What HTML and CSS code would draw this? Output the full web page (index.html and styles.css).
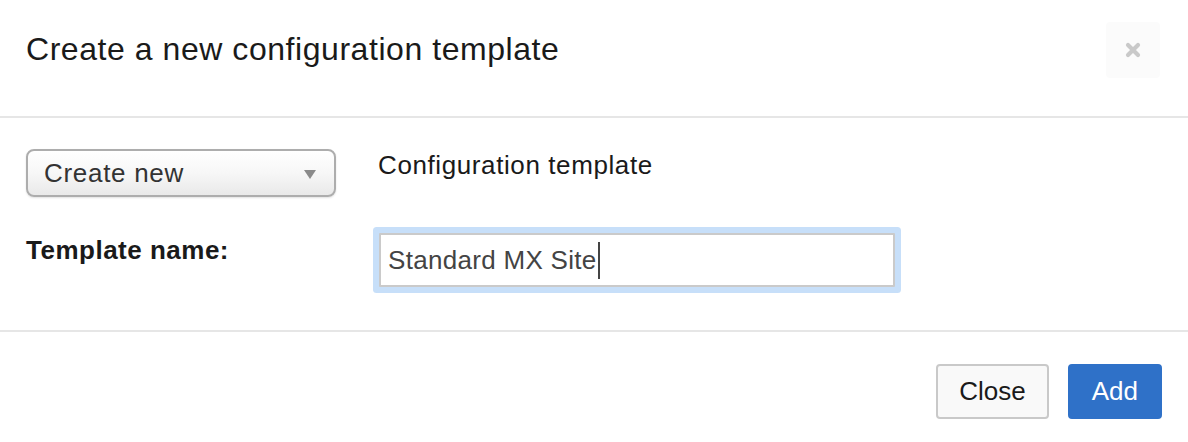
FILE: index.html
```html
<!DOCTYPE html>
<html lang="en">
<head>
<meta charset="utf-8">
<title>Create a new configuration template</title>
<link rel="stylesheet" href="styles.css">
</head>
<body>
<div class="modal">
  <div class="modal-header">
    <h1 class="modal-title">Create a new configuration template</h1>
    <button class="close-x" aria-label="Close">
      <svg width="18" height="18" viewBox="0 0 18 18"><path d="M4 4 L14 14 M14 4 L4 14" stroke="#c9c9c9" stroke-width="4.2" stroke-linecap="round"/></svg>
    </button>
  </div>
  <div class="modal-body">
    <div class="select">
      <span class="select-text">Create new</span>
      <svg class="select-arrow" width="12" height="9" viewBox="0 0 12 9"><path d="M0 0 H12 L6 9 Z" fill="#8a8a8a"/></svg>
    </div>
    <div class="section-label">Configuration template</div>
    <div class="field-label">Template name:</div>
    <div class="text-input" role="textbox"><span class="input-value">Standard MX Site</span><span class="caret"></span></div>
  </div>
  <div class="modal-footer">
    <button class="btn btn-default">Close</button>
    <button class="btn btn-primary">Add</button>
  </div>
</div>
</body>
</html>
```
FILE: styles.css
```css
html, body {
  margin: 0;
  padding: 0;
  background: #ffffff;
}
body {
  font-family: "Liberation Sans", Arial, sans-serif;
  color: #1a1a1a;
}
.modal {
  width: 1188px;
}
.modal-header {
  height: 118px;
  box-sizing: border-box;
  border-bottom: 2px solid #e6e6e6;
  display: flex;
  justify-content: space-between;
  align-items: flex-start;
  padding: 22px 28px 0 26px;
}
.modal-title {
  margin: 7px 0 0 0;
  font-size: 32px;
  line-height: 40px;
  font-weight: normal;
  letter-spacing: 0.55px;
  color: #1a1a1a;
}
.close-x {
  width: 54px;
  height: 56px;
  border: none;
  border-radius: 4px;
  background: #fbfbfb;
  display: flex;
  align-items: center;
  justify-content: center;
  padding: 0;
  margin: 0;
}
.close-x svg {
  display: block;
}
.modal-body {
  height: 214px;
  box-sizing: border-box;
  border-bottom: 2px solid #e6e6e6;
  padding: 31px 26px 0 26px;
  display: grid;
  grid-template-columns: 310px 516px;
  grid-template-rows: 48px 54px;
  column-gap: 43px;
  row-gap: 36px;
}
.select {
  box-sizing: border-box;
  height: 48px;
  border: 2px solid #adadad;
  border-radius: 8px;
  background: linear-gradient(#ffffff 0%, #f7f7f7 50%, #e9e9e9 100%);
  box-shadow: 0 1px 2px rgba(0,0,0,0.12);
  display: flex;
  align-items: center;
  justify-content: space-between;
  padding: 0 18px 0 16px;
}
.select-text {
  font-size: 26px;
  letter-spacing: 0.7px;
  color: #333;
}
.select-arrow {
  display: block;
  margin-top: 2px;
}
.section-label {
  font-size: 26px;
  letter-spacing: 0.6px;
  line-height: 32px;
  color: #1a1a1a;
  margin-left: -1px;
}
.field-label {
  font-size: 26px;
  font-weight: bold;
  letter-spacing: 0.5px;
  line-height: 32px;
  color: #1a1a1a;
  margin-top: 1px;
}
.text-input {
  box-sizing: border-box;
  height: 54px;
  border: 2px solid #cacaca;
  background: #fff;
  box-shadow: 0 0 0 6px #c7dff9;
  border-radius: 1px;
  display: flex;
  align-items: center;
  padding: 0 0 0 7px;
}
.input-value {
  font-size: 26px;
  letter-spacing: 0.3px;
  color: #444;
}
.caret {
  display: inline-block;
  width: 2px;
  height: 37px;
  background: #444;
  margin-left: 1px;
}
.modal-footer {
  display: flex;
  justify-content: flex-end;
  gap: 19px;
  padding: 32px 26px 0 0;
}
.btn {
  font-family: "Liberation Sans", Arial, sans-serif;
  font-size: 26px;
  height: 55px;
  box-sizing: border-box;
  border-radius: 4px;
  padding: 0 22px;
  margin: 0;
  cursor: pointer;
}
.btn-default {
  background: #f9f9f9;
  border: 2px solid #c9c9c9;
  color: #1a1a1a;
  padding: 0 21px;
}
.btn-primary {
  background: #2f71c8;
  border: 2px solid #2f71c8;
  color: #fff;
}
```
